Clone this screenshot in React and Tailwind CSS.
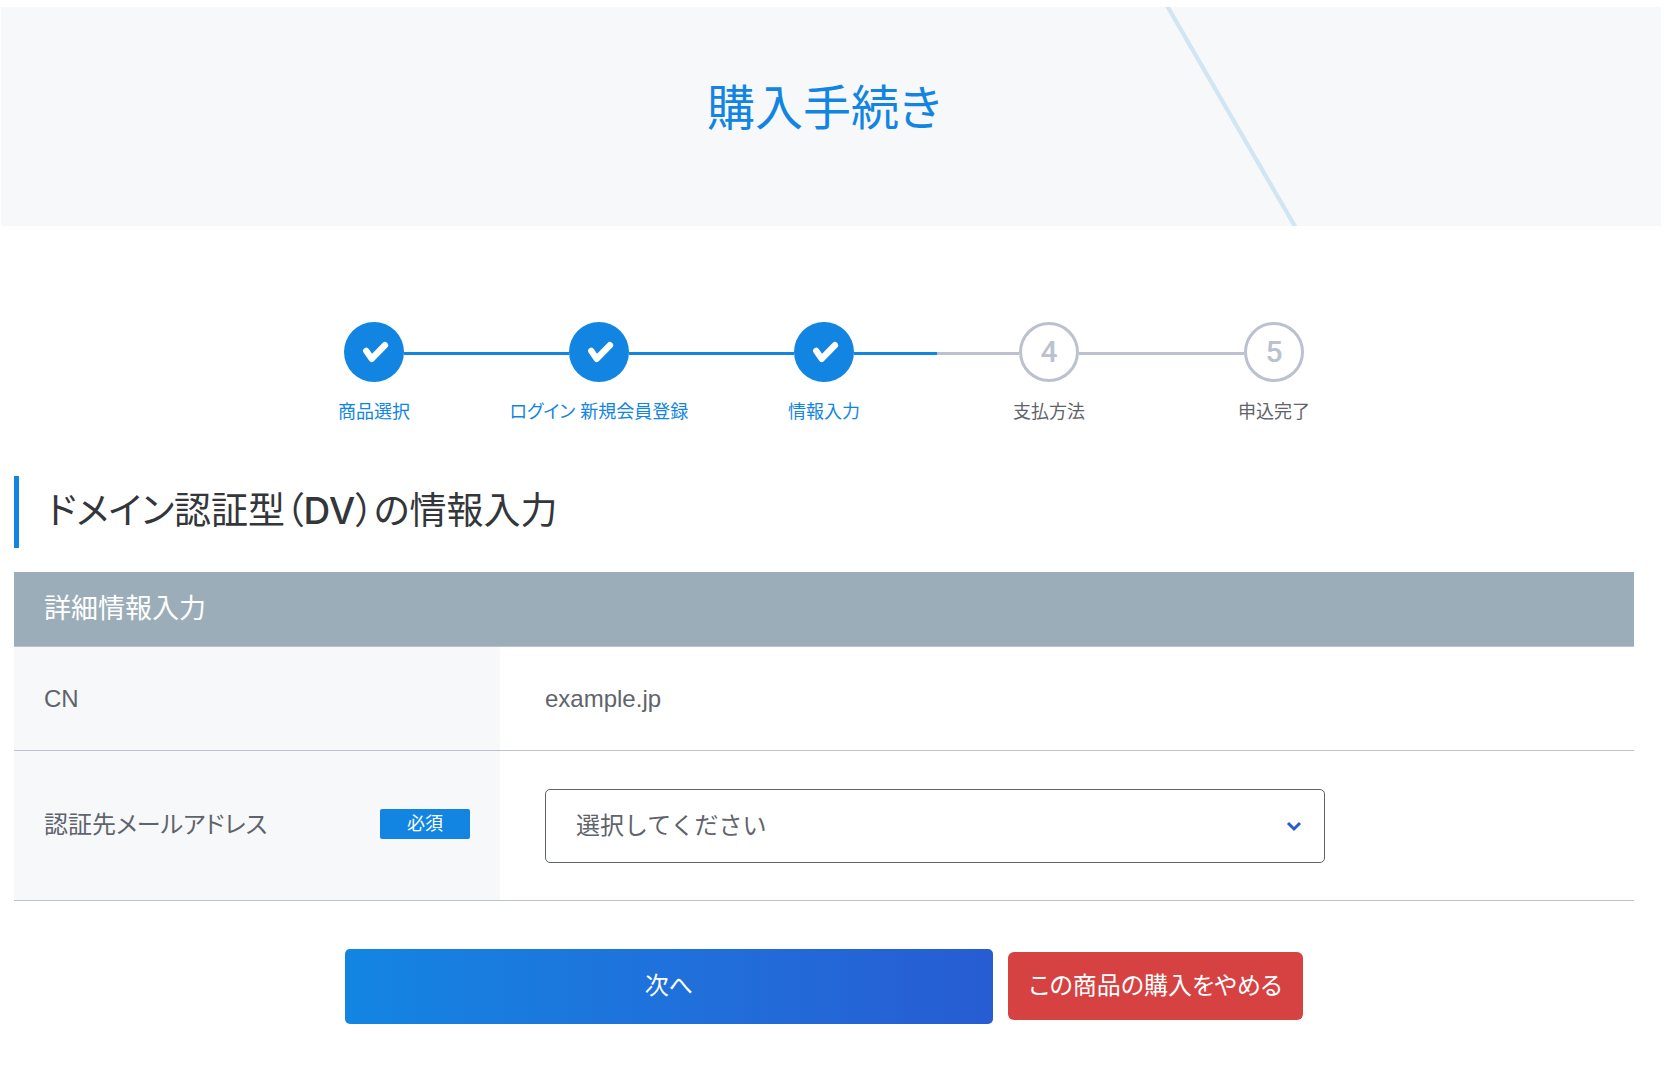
import { useState } from 'react';

const steps = [
  { label: '商品選択', done: true },
  { label: 'ログイン 新規会員登録', done: true },
  { label: '情報入力', done: true },
  { label: '支払方法', done: false },
  { label: '申込完了', done: false },
];

function CheckMark() {
  return (
    <svg width="60" height="60" viewBox="0 0 60 60" fill="none" aria-hidden="true">
      <path d="M22.3 29L27.7 36.8L40.9 23.2" stroke="white" strokeWidth="6.4" strokeLinecap="round" strokeLinejoin="round" />
    </svg>
  );
}

function PageHeader() {
  return (
    <header className="relative ml-px mr-[5px] pl-[13px] pr-[27px] pt-14 pb-[72px] bg-[#f7f8fa] overflow-hidden">
      <h1 className="relative z-10 text-center text-5xl leading-[91px] text-[#1285e2]">購入手続き</h1>
      {/* Diagonal accent line */}
      <svg className="absolute top-0 left-[70%] h-full" width="140" viewBox="0 0 140 219" fill="none" aria-hidden="true">
        <path d="M3 -3L133.5 222" stroke="#d1e5f2" strokeWidth="4.2" />
      </svg>
    </header>
  );
}

function StepBar() {
  return (
    <ol className="flex justify-center">
      {steps.map((step, i) => (
        <li key={i} className="w-[225px] flex flex-col items-center">
          <div className="w-full flex items-center">
            <span className={`flex-1 h-[3px] mt-[3px] ${i === 0 ? '' : step.done ? 'bg-[#1285e2]' : 'bg-[#bcc1cf]'}`} />
            <span
              className={`size-[60px] shrink-0 rounded-full flex items-center justify-center text-3xl font-medium font-['Roboto',sans-serif] ${
                step.done ? 'bg-[#1285e2]' : 'border-[3px] border-[#bcc1cf] text-[#bcc1cf]'
              }`}
            >
              {step.done ? <CheckMark /> : i + 1}
            </span>
            <span
              className={`flex-1 h-[3px] mt-[3px] ${
                i === steps.length - 1 ? '' : step.done ? 'bg-[#1285e2]' : 'bg-[#bcc1cf]'
              }`}
            />
          </div>
          <span className={`mt-4 text-lg leading-7 ${step.done ? 'text-[#1285e2]' : ''}`}>{step.label}</span>
        </li>
      ))}
    </ol>
  );
}

function App() {
  const [email, setEmail] = useState('');

  return (
    <div className="pt-[7px] pb-14 bg-white text-2xl text-[#5f646c] font-['Liberation_Sans','Noto_Sans_CJK_JP',sans-serif] [font-feature-settings:'palt']" lang="ja">
      <PageHeader />

      <main className="pl-[14px] pr-8 pt-24">
        <StepBar />

        <h2 className="mt-[50px] border-l-[5px] border-[#1285e2] pl-7 text-[37px] leading-[72px] text-[#33363b]">
          ドメイン認証型（<span className="leading-none font-medium font-['Inter',sans-serif]">DV</span>）の情報入力
        </h2>

        <form onSubmit={(e) => e.preventDefault()}>
          <table className="mt-6 w-full table-fixed border-collapse text-left">
            <colgroup>
              <col className="w-[30%]" />
              <col />
            </colgroup>
            <thead>
              <tr className="border-b border-[#bcc1cf]">
                <th colSpan={2} className="h-[74px] px-[30px] bg-[#9badb8] text-[27px] leading-9 font-normal text-white">
                  詳細情報入力
                </th>
              </tr>
            </thead>
            <tbody>
              <tr className="border-b border-[#bcc1cf]">
                <th className="h-[104px] px-[30px] pt-0.5 bg-[#f7f8fa] font-normal">CN</th>
                <td className="px-[45px] pt-0.5">example.jp</td>
              </tr>
              <tr className="border-b border-[#bcc1cf]">
                <th className="px-[30px] bg-[#f7f8fa] font-normal">
                  <div className="flex items-start justify-between">
                    <label htmlFor="email">認証先メールアドレス</label>
                    <span className="w-[90px] rounded-xs bg-[#1285e2] text-center text-lg leading-[30px] text-white">必須</span>
                  </div>
                </th>
                <td className="px-[45px] pt-[38px] pb-[37px]">
                  <div className="relative max-w-[780px]">
                    <select
                      id="email"
                      value={email}
                      onChange={(e) => setEmail(e.target.value)}
                      className="block w-full h-[74px] appearance-none rounded-[5px] border border-[#5f646c] bg-white px-[30px] cursor-pointer [font-feature-settings:normal]"
                    >
                      <option value="">選択してください</option>
                    </select>
                    <svg className="absolute right-[23px] top-[29px] pointer-events-none" width="16" height="16" viewBox="0 0 16 16" fill="none" aria-hidden="true">
                      <path d="M2 5L8 11L14 5" stroke="#275cd3" strokeWidth="3" />
                    </svg>
                  </div>
                </td>
              </tr>
            </tbody>
          </table>

          <div className="mt-12 flex items-center justify-center gap-[15px] text-white">
            <button type="submit" className="w-2/5 h-[75px] rounded-[5px] bg-linear-to-r from-[#1285e2] to-[#275cd3] cursor-pointer">
              次へ
            </button>
            <button type="button" className="h-[68px] px-[21px] rounded-md bg-[#d64242] cursor-pointer">
              この商品の購入をやめる
            </button>
          </div>
        </form>
      </main>
    </div>
  );
}

export default App;
